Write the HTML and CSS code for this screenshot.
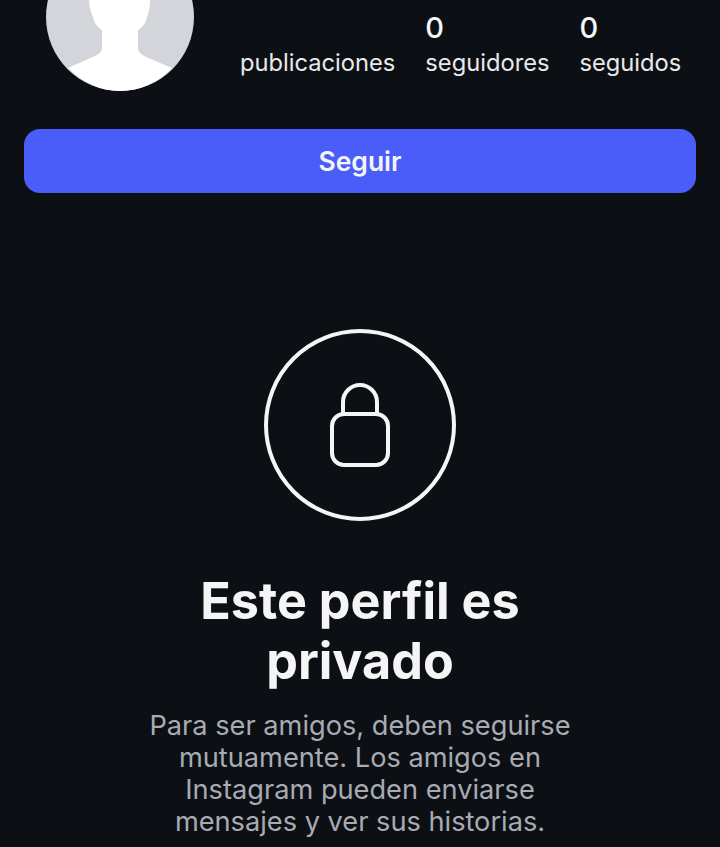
FILE: index.html
```html
<!DOCTYPE html>
<html lang="es">
  <head>
    <meta charset="UTF-8" />
    <meta name="viewport" content="width=device-width, initial-scale=1.0" />
    <title>Perfil privado</title>
    <link rel="stylesheet" href="styles.css">
  </head>
  <body>
    <div class="page">
      <div class="profile-header">
        <div class="avatar">
          <svg viewBox="0 0 148 148" width="148" height="148">
            <circle cx="74" cy="74" r="74" fill="#d3d5da" />
            <path d="M43 40 L43 57 C43 64 45 69 47 74 C48 80 52 85 56 87 L56 105 C56 109 53 111 49 113 L22 125 C36 139 54 148 74 148 C94 148 113 139 126 125 L100 114 C95 111 92 109 92 105 L92 87 C96 85 100 80 101 74 C103 69 104 64 104 57 L104 40 Z" fill="#fff" />
          </svg>
        </div>
        <div class="stats">
          <div class="stat"><span class="stat-num">&nbsp;</span><span class="stat-label">publicaciones</span></div>
          <div class="stat"><span class="stat-num">0</span><span class="stat-label">seguidores</span></div>
          <div class="stat"><span class="stat-num">0</span><span class="stat-label">seguidos</span></div>
        </div>
      </div>

      <button class="follow-btn">Seguir</button>

      <div class="private-section">
        <div class="lock-circle">
          <svg viewBox="0 0 60 84" width="60" height="84" fill="none" stroke="#f5f5f5" stroke-width="4">
            <path d="M13 31 V19 A17 17 0 0 1 47 19 V31" />
            <rect x="2" y="31" width="56" height="51" rx="12" />
          </svg>
        </div>
        <h2 class="private-title">Este perfil es privado</h2>
        <p class="private-text">Para ser amigos, deben seguirse mutuamente. Los amigos en Instagram pueden enviarse mensajes y ver sus historias.</p>
      </div>
    </div>
  </body>
</html>
```

FILE: styles.css
```css
html,
body {
  margin: 0;
  padding: 0;
  height: 847px;
  overflow: hidden;
}

body {
  font-family: Inter, "Noto Sans", sans-serif;
  background-color: #0c1014;
  color: #f5f5f5;
}

.page {
  padding: 0 24px;
}

.profile-header {
  display: flex;
  margin-top: -57px;
  padding-left: 22px;
}

.avatar {
  width: 148px;
  height: 148px;
  flex-shrink: 0;
}

.avatar svg {
  display: block;
}

.stats {
  display: flex;
  gap: 30px;
  margin-left: 46px;
  padding-top: 67px;
}

.stat {
  display: flex;
  flex-direction: column;
}

.stat-num {
  font-size: 29px;
  font-weight: 500;
  line-height: 36px;
}

.stat-label {
  font-size: 23.7px;
  line-height: 34px;
  color: #e8e9eb;
}

.follow-btn {
  display: block;
  width: 100%;
  height: 64px;
  margin-top: 38px;
  border: none;
  border-radius: 16px;
  background-color: #4a5df9;
  color: #f5f5f5;
  font-family: inherit;
  font-size: 26.5px;
  font-weight: 600;
}

.private-section {
  display: flex;
  flex-direction: column;
  align-items: center;
  margin-top: 136px;
  text-align: center;
}

.lock-circle {
  display: flex;
  align-items: center;
  justify-content: center;
  box-sizing: border-box;
  width: 192px;
  height: 192px;
  border: 4px solid #f5f5f5;
  border-radius: 50%;
}

.private-title {
  width: 400px;
  margin: 50px 0 0;
  font-size: 50.3px;
  font-weight: 700;
  line-height: 60px;
}

.private-text {
  width: 450px;
  margin: 19px 0 0;
  font-size: 27.2px;
  line-height: 32px;
  color: #a8abb3;
}
```
